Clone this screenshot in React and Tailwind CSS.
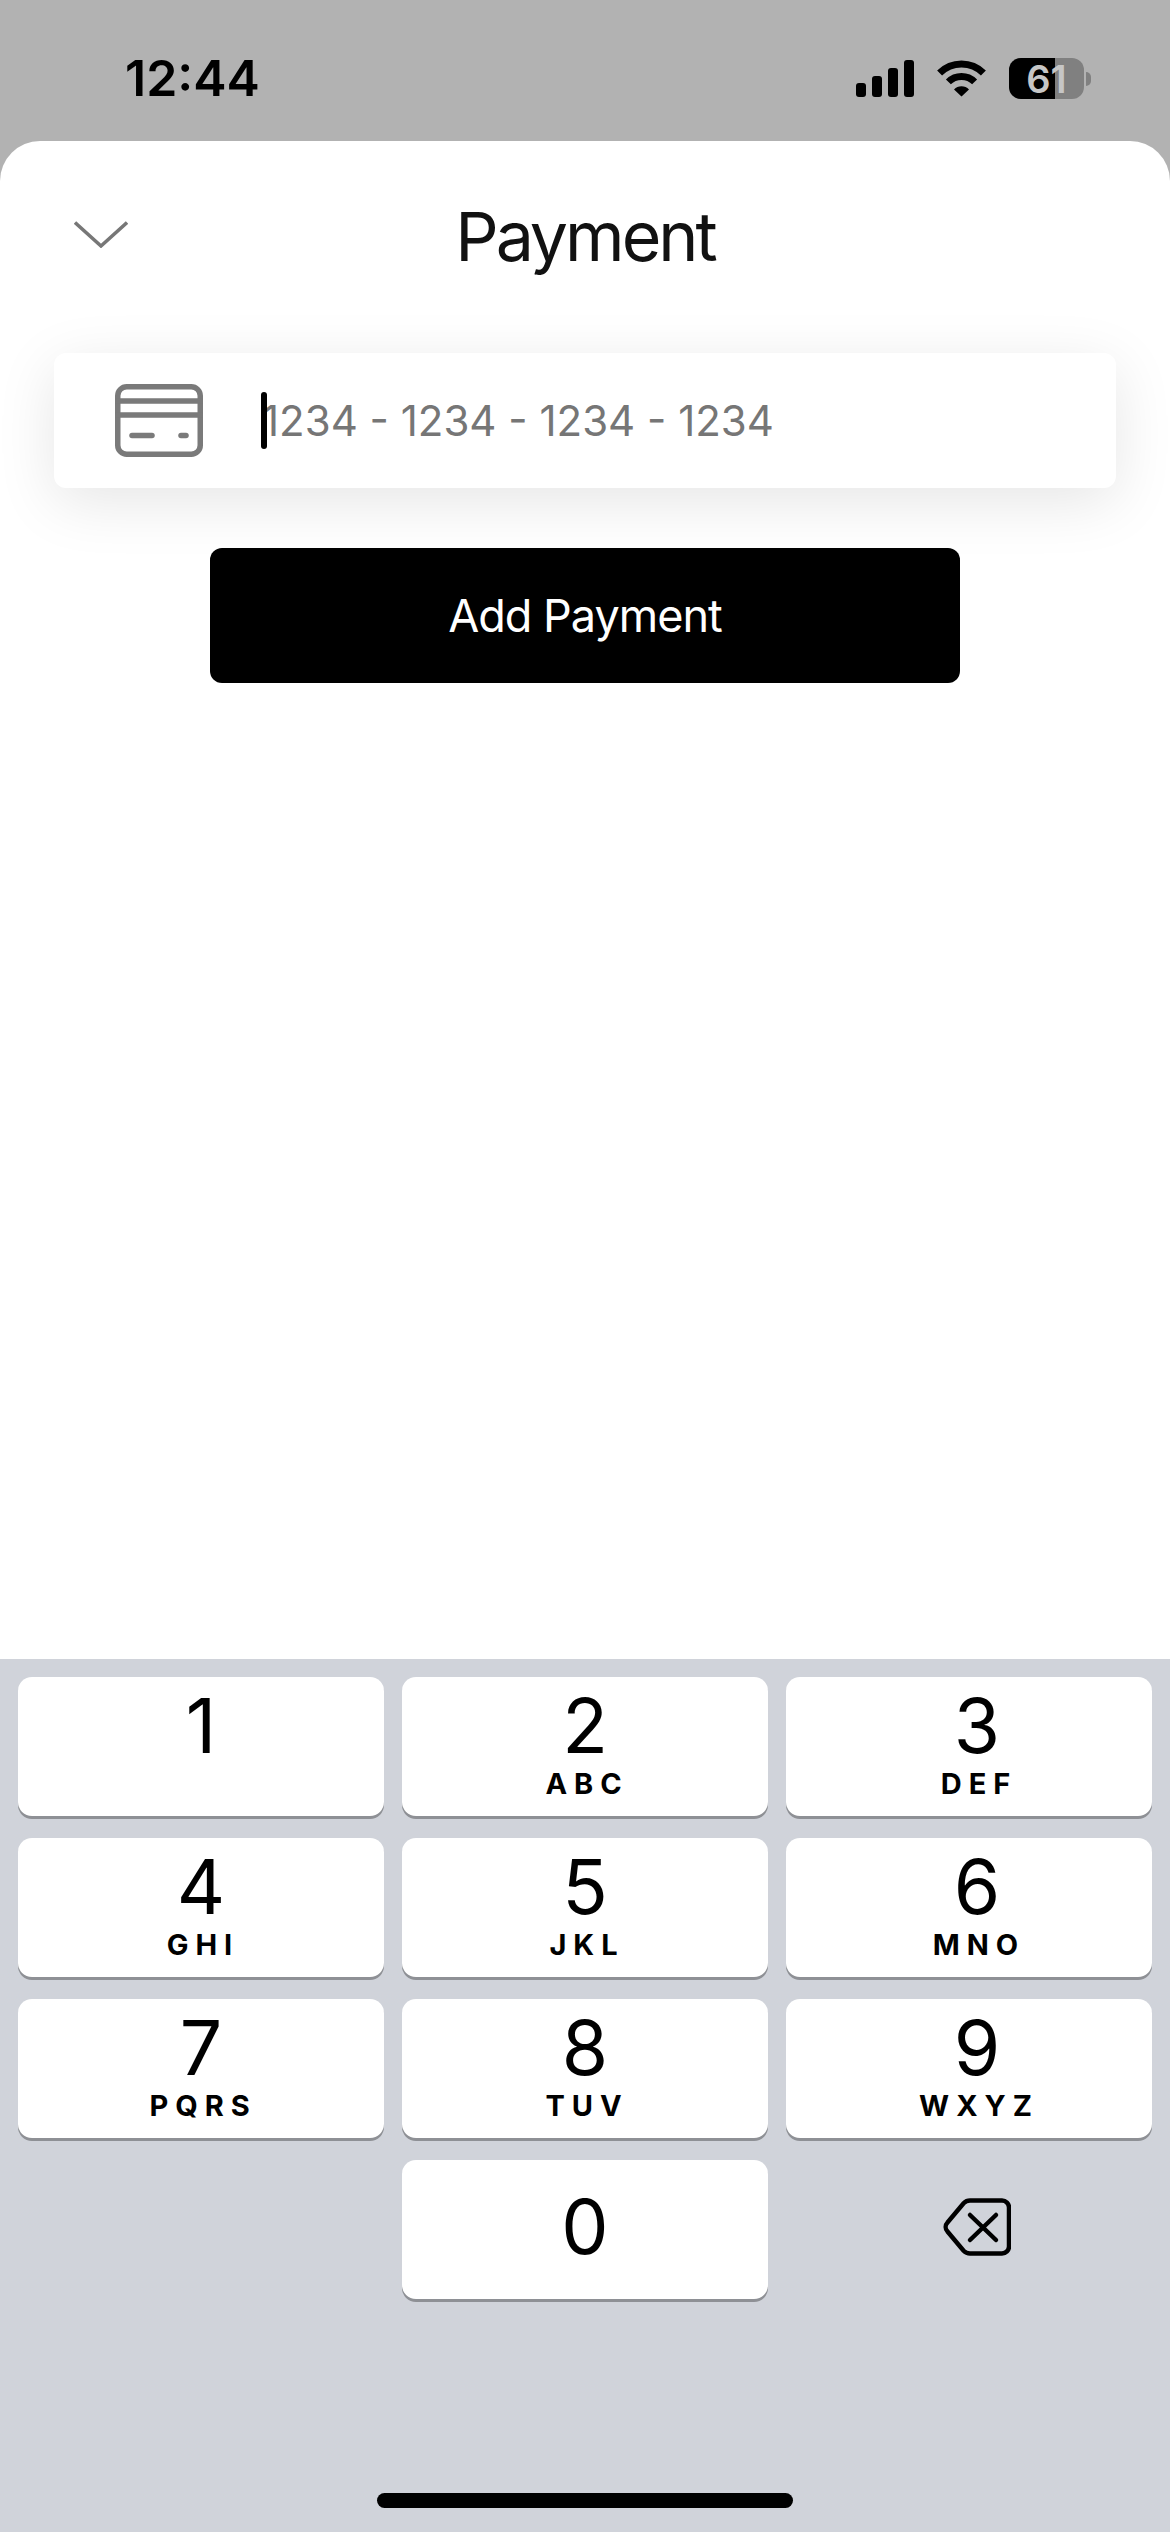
const keys = [
  ["1", ""],
  ["2", "ABC"],
  ["3", "DEF"],
  ["4", "GHI"],
  ["5", "JKL"],
  ["6", "MNO"],
  ["7", "PQRS"],
  ["8", "TUV"],
  ["9", "WXYZ"],
];

// Signal, wifi and battery in the top right
function StatusIcons() {
  return (
    <div className="flex items-center">
      <svg width="58" height="37" viewBox="0 0 58 37" fill="black">
        <rect x="0" y="23" width="10" height="14" rx="3" />
        <rect x="16" y="16" width="10" height="21" rx="3" />
        <rect x="32" y="8" width="10" height="29" rx="3" />
        <rect x="48" y="0" width="10" height="37" rx="3" />
      </svg>
      <svg className="ml-[22px]" width="51" height="37" viewBox="0 0 51 37" fill="none" stroke="black" strokeWidth="7">
        <path d="M3.6 13.1A31 31 0 0 1 47.4 13.1" />
        <path d="M12.4 21.9A18.5 18.5 0 0 1 38.6 21.9" />
        <path d="M25.5 36.5L18 29.5A10.5 10.5 0 0 1 33 29.5Z" fill="black" stroke="none" />
      </svg>
      <div className="relative ml-[22px] h-[41px] w-[75px] rounded-[12px] bg-[#808080]">
        <div className="h-full w-[46px] rounded-l-[12px] bg-black" />
        <span className="absolute inset-0 flex items-center justify-center text-[38px] leading-none font-semibold text-[#c6c6c6]">
          61
        </span>
      </div>
      <div className="ml-[2px] h-[14px] w-[5px] rounded-r-full bg-[#808080]" />
    </div>
  );
}

function CardIcon() {
  return (
    <svg width="88" height="73" viewBox="0 0 88 73" fill="none" stroke="#7a7a7a" strokeWidth="5.5" strokeLinecap="round">
      <rect x="2.75" y="2.75" width="82.5" height="67.5" rx="9" />
      <path d="M2.5 17H85.5" />
      <path d="M2.5 31H85.5" />
      <path d="M17 51.5H37" />
      <path d="M66 51.5H71" />
    </svg>
  );
}

function Key({ digit, letters, shifted }) {
  return (
    <div
      className={`flex h-[139px] flex-col items-center rounded-[14px] bg-white pt-[9px] shadow-[0_3px_0_#8e9095] ${
        shifted ? "pl-[16px]" : ""
      }`}
    >
      <span className="text-[75px] leading-[80px] font-normal text-black">{digit}</span>
      <span className="mt-[1px] pl-[4px] text-[29px] leading-[34px] font-bold tracking-[0.24em] text-black">{letters}</span>
    </div>
  );
}

export default function App() {
  return (
    <div className="flex h-[2532px] w-[1170px] flex-col overflow-hidden bg-[#b2b2b2] font-['Inter',sans-serif]">
      {/* Status bar */}
      <div className="flex h-[141px] shrink-0 items-start justify-between pt-[53px] pr-[79px] pl-[125px]">
        <span className="text-[50px] leading-[50px] font-semibold text-black">12:44</span>
        <div className="mt-[5px]">
          <StatusIcons />
        </div>
      </div>

      {/* Sheet */}
      <div className="flex flex-1 flex-col rounded-t-[40px] bg-white">
        <div className="relative flex h-[212px] shrink-0 items-center justify-center">
          <svg className="absolute top-[80px] left-[74px]" width="54" height="27" viewBox="0 0 54 27" fill="none" stroke="#777777" strokeWidth="3.5">
            <path d="M1 1.5L27 25L53 1.5" />
          </svg>
          <h1 className="pb-[22px] text-[68px] leading-none font-normal tracking-[-0.044em] text-[#111111]">Payment</h1>
        </div>

        <div className="relative mx-[54px] flex h-[135px] items-center rounded-[12px] bg-white pl-[61px] shadow-[0_14px_60px_rgba(0,0,0,0.1)]">
          <CardIcon />
          <div className="relative ml-[59px] text-[42px] leading-none text-[#767676]">
            <div className="absolute top-[-8px] left-[-1px] h-[57px] w-[6px] rounded-full bg-black" />
            1234 - 1234 - 1234 - 1234
          </div>
        </div>

        <button className="mx-auto mt-[60px] flex h-[135px] w-[750px] items-center justify-center rounded-[12px] bg-black text-[45px] leading-none font-normal tracking-[-0.022em] text-white">
          Add Payment
        </button>
      </div>

      {/* Number pad */}
      <div className="flex h-[873px] shrink-0 flex-col bg-[#d0d3da] px-[18px] pt-[18px]">
        <div className="grid grid-cols-3 gap-x-[18px] gap-y-[22px]">
          {keys.map(([digit, letters], i) => (
            <Key key={digit} digit={digit} letters={letters} shifted={i % 3 === 2} />
          ))}
          <div />
          <div className="flex h-[139px] items-center justify-center rounded-[14px] bg-white pb-[6px] shadow-[0_3px_0_#8e9095]">
            <span className="text-[75px] leading-none text-black">0</span>
          </div>
          <div className="flex h-[139px] items-center justify-center pb-[6px] pl-[16px]">
            <svg width="68" height="58" viewBox="0 0 68 58" fill="none" stroke="black" strokeWidth="4.5" strokeLinecap="round">
              <path d="M27 2.5H59a7 7 0 0 1 7 7v39a7 7 0 0 1-7 7H27a9 9 0 0 1-6.4-2.7L4.5 33.5a6.5 6.5 0 0 1 0-9L20.6 5.2A9 9 0 0 1 27 2.5Z" />
              <path d="M27 17L53 42" />
              <path d="M53 17L27 42" />
            </svg>
          </div>
        </div>
        <div className="mt-auto mb-[24px] h-[15px] w-[416px] self-center rounded-full bg-black" />
      </div>
    </div>
  );
}
